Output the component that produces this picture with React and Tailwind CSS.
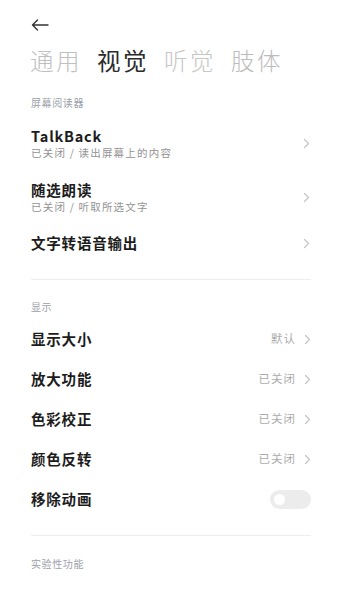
import React from 'react';

const Chevron = () => (
  <svg width="7" height="11" viewBox="0 0 7 11" fill="none" className="shrink-0">
    <path d="M1.5 1.5 L5.5 5.5 L1.5 9.5" stroke="#c4c4c4" strokeWidth="1.2" strokeLinecap="round" strokeLinejoin="round" />
  </svg>
);

const SectionHeader = ({ children, className = '' }) => (
  <div className={`h-[12px] leading-[12px] text-[10px] tracking-[0.6px] text-[#9ba1aa] ${className}`}>
    {children}
  </div>
);

const NavRow = ({ title, subtitle, height }) => (
  <div className={`flex items-center justify-between ${height}`}>
    <div className="flex flex-col">
      <div className="text-[14.5px] leading-[18px] font-bold tracking-[0.8px] text-[#1c1c1c]">{title}</div>
      {subtitle && (
        <div className="text-[10.5px] leading-[15px] tracking-[1.2px] text-[#939393]">{subtitle}</div>
      )}
    </div>
    <div className="pr-[1px]">
      <Chevron />
    </div>
  </div>
);

const ValueRow = ({ title, value }) => (
  <div className="flex items-center justify-between h-[40px]">
    <div className="text-[14.5px] font-bold tracking-[0.8px] text-[#1c1c1c]">{title}</div>
    <div className="flex items-center gap-[8px]">
      <span className="text-[11.5px] tracking-[1px] text-[#ababab]">{value}</span>
      <Chevron />
    </div>
  </div>
);

const App = () => {
  const tabs = [
    { label: '通用', color: 'text-[#c0c0c0] font-light' },
    { label: '视觉', color: 'text-[#2b2b2b] font-normal' },
    { label: '听觉', color: 'text-[#c6c6c6] font-light' },
    { label: '肢体', color: 'text-[#bcbcbc] font-light' },
  ];

  return (
    <div
      className="w-[337px] min-h-[600px] bg-white pl-[31px] pr-[26px]"
      style={{ fontFamily: '"Noto Sans CJK SC", "Noto Sans", sans-serif' }}
    >
      <div className="h-[48px] flex items-center pt-[2px]">
        <svg width="18" height="12" viewBox="0 0 18 12" fill="none">
          <path d="M17 6 H1.5 M6.5 1 L1.5 6 L6.5 11" stroke="#333" strokeWidth="1.4" strokeLinecap="round" strokeLinejoin="round" />
        </svg>
      </div>

      <div className="h-[24px] flex items-center gap-[15px] -ml-[1px]">
        {tabs.map((t) => (
          <span key={t.label} className={`text-[23.5px] leading-[24px] tracking-[2.5px] ${t.color}`}>
            {t.label}
          </span>
        ))}
      </div>

      <SectionHeader className="mt-[25px]">屏幕阅读器</SectionHeader>

      <div className="mt-[7px]">
        <NavRow title="TalkBack" subtitle="已关闭 / 读出屏幕上的内容" height="h-[54px]" />
        <NavRow title="随选朗读" subtitle="已关闭 / 听取所选文字" height="h-[54px]" />
        <NavRow title="文字转语音输出" height="h-[38px]" />
      </div>

      <div className="mt-[17px] h-px bg-[#eeeeee]" />

      <SectionHeader className="mt-[21px]">显示</SectionHeader>

      <div className="mt-[6px]">
        <ValueRow title="显示大小" value="默认" />
        <ValueRow title="放大功能" value="已关闭" />
        <ValueRow title="色彩校正" value="已关闭" />
        <ValueRow title="颜色反转" value="已关闭" />
        <div className="flex items-center justify-between h-[40px]">
          <div className="text-[14.5px] font-bold tracking-[0.8px] text-[#1c1c1c]">移除动画</div>
          <div className="w-[41px] h-[19px] rounded-full bg-[#ececec] flex items-center pl-[4px]">
            <div className="w-[11px] h-[11px] rounded-full bg-white" />
          </div>
        </div>
      </div>

      <div className="mt-[16px] h-px bg-[#eeeeee]" />

      <SectionHeader className="mt-[22px]">实验性功能</SectionHeader>
    </div>
  );
};

export default App;
